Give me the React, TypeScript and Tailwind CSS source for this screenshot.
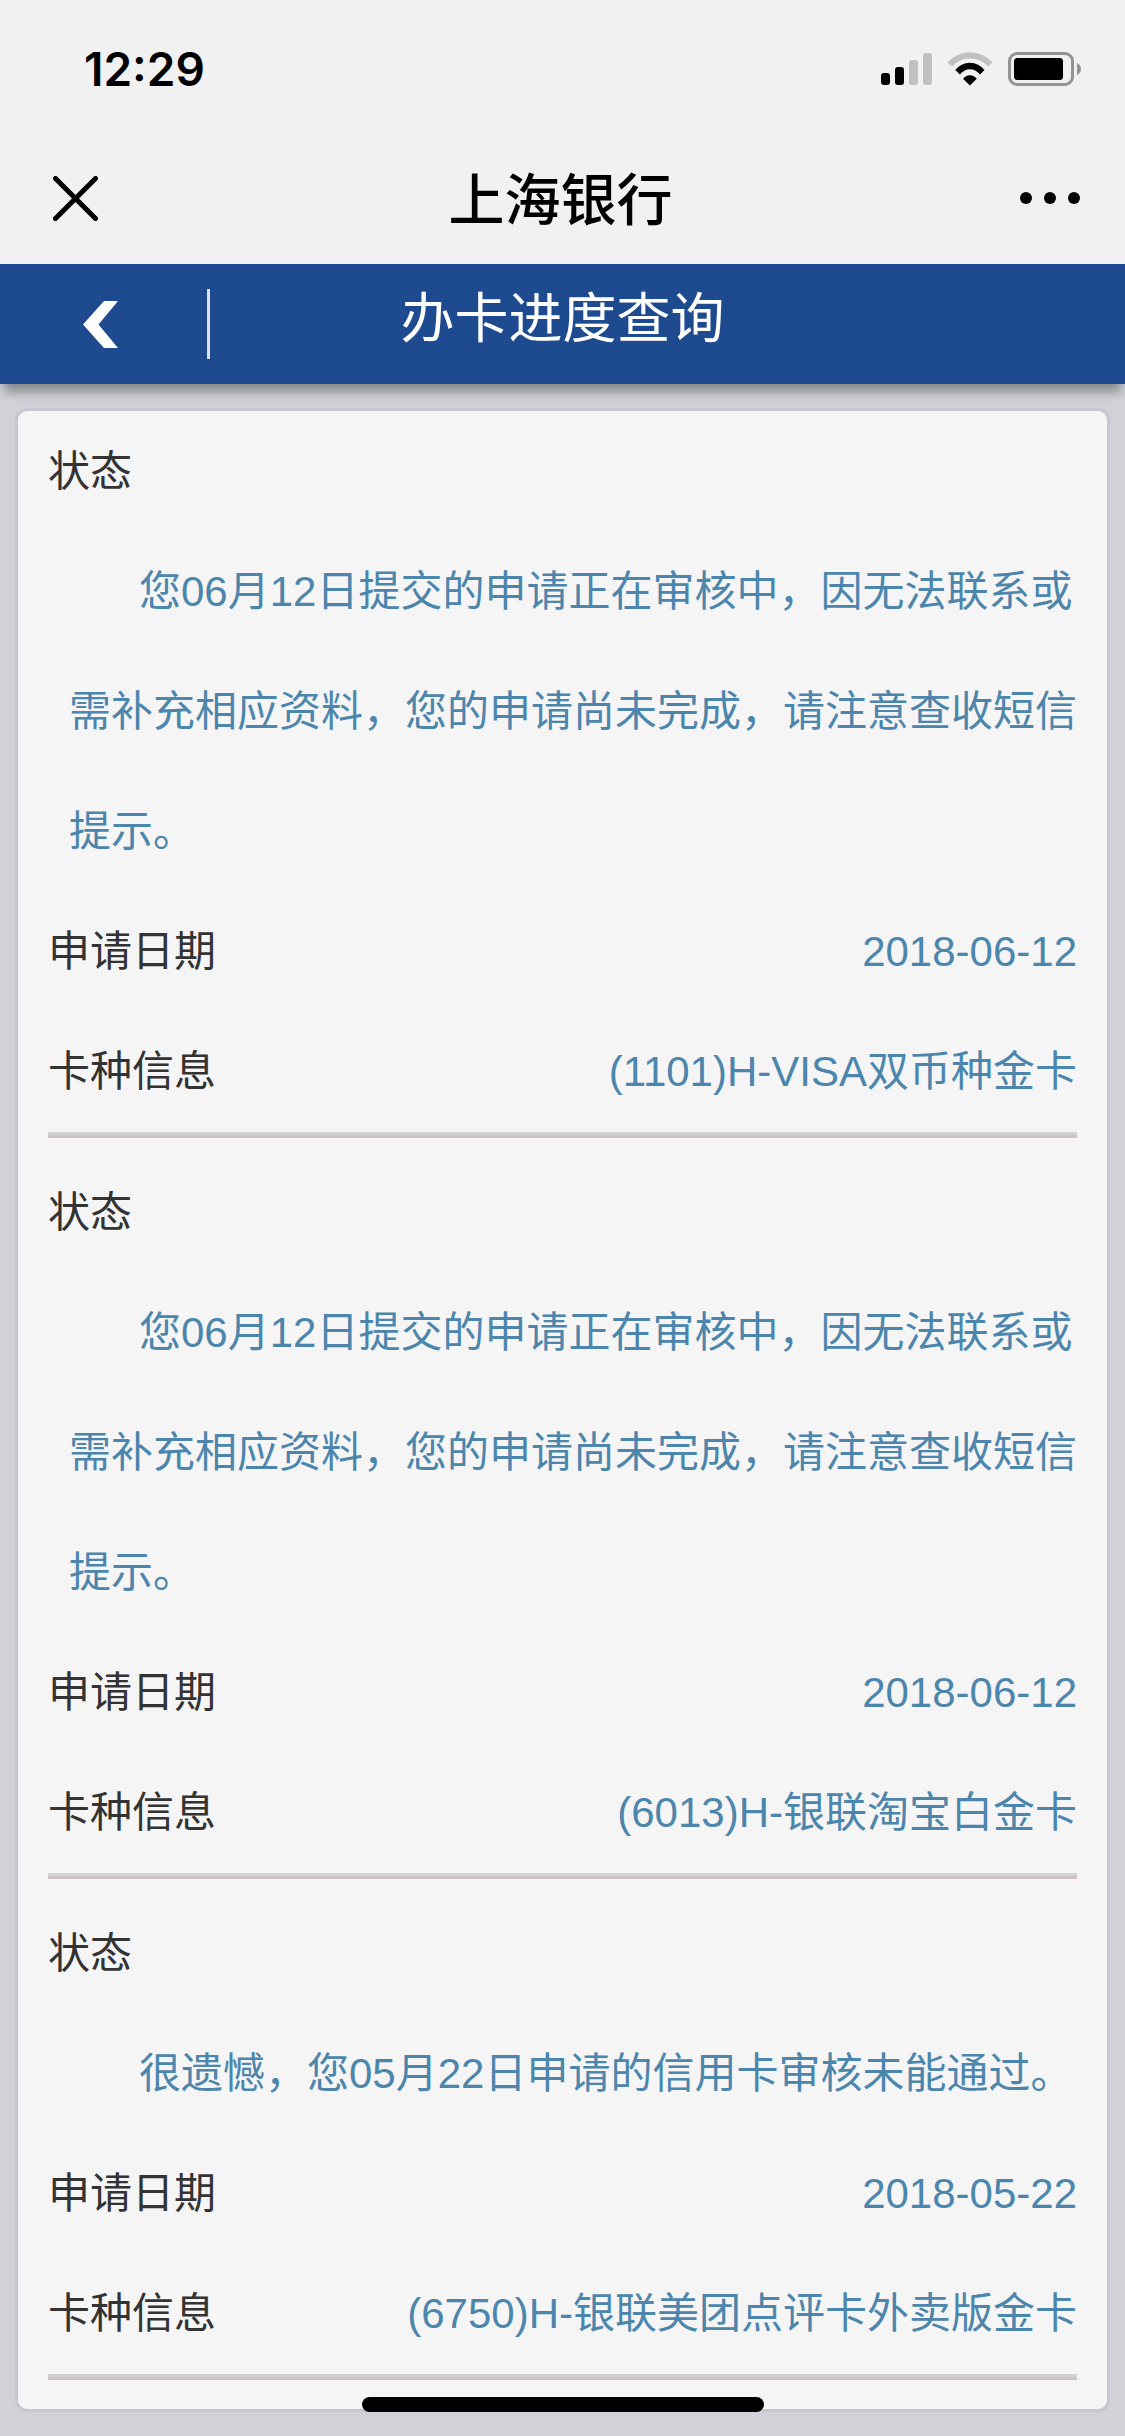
const applications = [
    {
        status: "您06月12日提交的申请正在审核中，因无法联系或需补充相应资料，您的申请尚未完成，请注意查收短信提示。",
        date: "2018-06-12",
        card: "(1101)H-VISA双币种金卡",
    },
    {
        status: "您06月12日提交的申请正在审核中，因无法联系或需补充相应资料，您的申请尚未完成，请注意查收短信提示。",
        date: "2018-06-12",
        card: "(6013)H-银联淘宝白金卡",
    },
    {
        status: "很遗憾，您05月22日申请的信用卡审核未能通过。",
        date: "2018-05-22",
        card: "(6750)H-银联美团点评卡外卖版金卡",
    },
];

function StatusBar() {
    return (
        <div className="flex h-[132px] items-center justify-between pt-1.5 pr-11 pl-[84px]">
            <time className="font-['Inter',sans-serif] text-[46px] leading-none font-semibold">12:29</time>
            <div className="flex items-center gap-[15px]">
                <svg width="51" height="34" viewBox="0 0 51 34" aria-hidden="true">
                    <rect x="0" y="21" width="9" height="12" rx="3" />
                    <rect x="14" y="15" width="9" height="18" rx="3" />
                    <rect x="28" y="8" width="9" height="25" rx="3" fill="#c1c1c1" />
                    <rect x="42" y="1" width="9" height="32" rx="3" fill="#c1c1c1" />
                </svg>
                <svg width="46" height="34" viewBox="0 0 46 34" aria-hidden="true">
                    <path d="M0.5 10.2A30.5 30.5 0 0 1 45.5 10.2L41 14.4A24.5 24.5 0 0 0 5 14.4Z" fill="#c1c1c1" />
                    <path d="M8.3 18A18.3 18.3 0 0 1 37.5 18L33 22.6A12.2 12.2 0 0 0 12.9 22.6Z" />
                    <path d="M16 26.8A8.4 8.4 0 0 1 29.8 26.8L22.9 33.4Z" />
                </svg>
                <svg width="73" height="34" viewBox="0 0 73 34" aria-hidden="true">
                    <rect x="1.5" y="1.5" width="63" height="31" rx="7.5" fill="none" stroke="#939393" strokeWidth="3" />
                    <rect x="6" y="6" width="49" height="22" rx="3.5" />
                    <path d="M69 11V23C71.5 22 73 19.6 73 17S71.5 12 69 11Z" fill="#939393" />
                </svg>
            </div>
        </div>
    );
}

function NavBar() {
    return (
        <nav className="grid h-[132px] grid-cols-[1fr_auto_1fr] items-center pr-[45px] pl-[41px]">
            <button type="button" aria-label="关闭" className="justify-self-start pl-3">
                <svg width="45" height="45" viewBox="0 0 45 45" stroke="#000" strokeWidth="5" strokeLinecap="round">
                    <path d="M2.5 2.5L42.5 42.5M42.5 2.5L2.5 42.5" />
                </svg>
            </button>
            <h1 className="pt-1.5 text-[56px] leading-none font-medium">上海银行</h1>
            <button type="button" aria-label="更多" className="justify-self-end">
                <svg width="60" height="12" viewBox="0 0 60 12">
                    <circle cx="6" cy="6" r="6" />
                    <circle cx="30" cy="6" r="6" />
                    <circle cx="54" cy="6" r="6" />
                </svg>
            </button>
        </nav>
    );
}

function PageHeader() {
    return (
        <header className="grid h-[120px] grid-cols-[1fr_auto_1fr] items-center bg-[#1e4a90] text-white shadow-[0_12px_10px_-4px_rgba(0,0,0,0.35)]">
            <div className="flex items-center">
                <button type="button" aria-label="返回" className="pr-[89px] pl-[83px]">
                    <svg width="35" height="47" viewBox="0 0 35 47" fill="#fff">
                        <path d="M21 0H35L15.5 23.5L35 47H21L0 23.5Z" />
                    </svg>
                </button>
                <span className="h-[70px] w-[3px] bg-[#dfe3ec]" />
            </div>
            <h2 className="pb-2.5 text-[54px] leading-none">办卡进度查询</h2>
        </header>
    );
}

export default function App() {
    return (
        <div className="relative min-h-screen bg-[#d1d2d8] font-['Liberation_Sans','Noto_Sans_CJK_SC',sans-serif]" lang="zh-CN">
            <div className="bg-[#f1f1f1] text-black">
                <StatusBar />
                <NavBar />
            </div>
            <PageHeader />
            <main className="px-[15px] py-6">
                <div className="rounded-xl border-[3px] border-[#c4c6d0] bg-[#f5f5f5] px-[30px] pt-px pb-3.5 text-[42px] leading-[120px] text-[#333]">
                    {applications.map((item, index) => (
                        <dl key={index} className="mb-[15px] border-b-[3px] border-[#cfc2c2]">
                            <dt>状态</dt>
                            <dd className="pl-[21px] indent-[70px] text-[#4c86ac]">{item.status}</dd>
                            <div className="flex justify-between">
                                <dt>申请日期</dt>
                                <dd className="text-[#4c86ac]">{item.date}</dd>
                            </div>
                            <div className="flex justify-between border-b-[3px] border-[#d3d3d3]">
                                <dt>卡种信息</dt>
                                <dd className="text-[#4c86ac]">{item.card}</dd>
                            </div>
                        </dl>
                    ))}
                </div>
            </main>
            <div className="absolute bottom-6 left-1/2 h-[15px] w-[402px] -translate-x-1/2 rounded-full bg-black" />
        </div>
    );
}
